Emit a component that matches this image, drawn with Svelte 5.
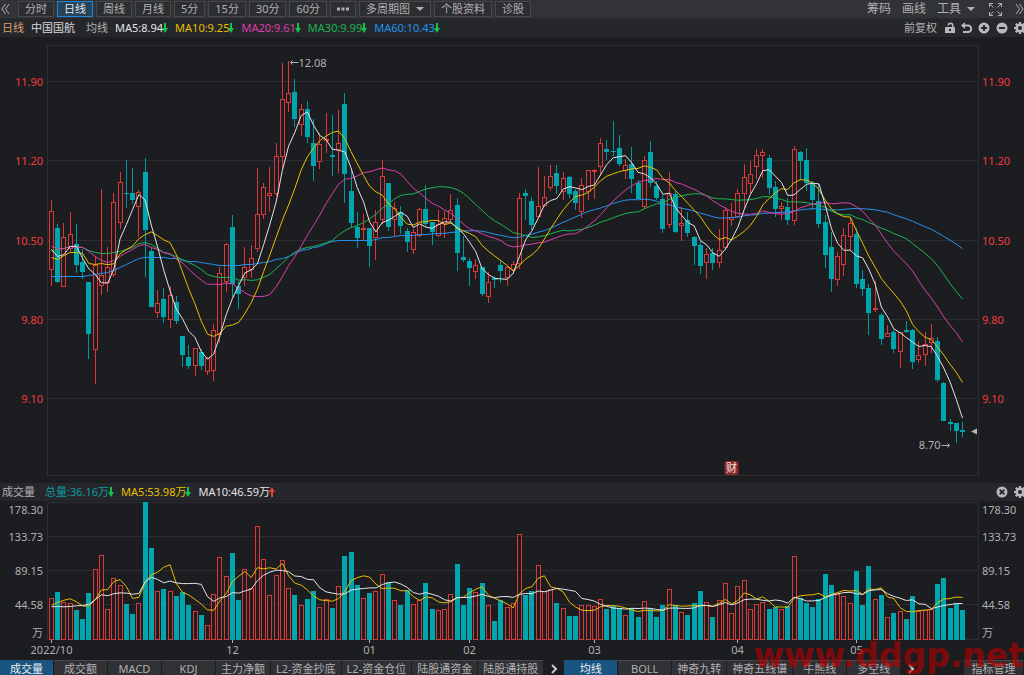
<script lang="ts">
    // one row per trading day: rising, high, body top, body bottom, low, volume top
    // prices are kept in pane units, volumes in thirds of a unit
    const days: number[][] = [
        [1, 200, 211, 269, 285, 354], [0, 224, 228, 282, 283, 337], [1, 223, 237, 286, 286, 367],
        [1, 212, 234, 248, 251, 370], [0, 224, 244, 265, 273, 391], [0, 249, 262, 272, 279, 417],
        [0, 282, 282, 334, 359, 340], [1, 256, 265, 349, 383, 268], [1, 189, 275, 285, 294, 226],
        [1, 247, 267, 282, 291, 386], [1, 193, 202, 274, 276, 293], [1, 172, 182, 222, 228, 314],
        [0, 160, 193, 194, 208, 373], [0, 168, 193, 200, 204, 402], [1, 190, 192, 206, 236, 370],
        [0, 158, 172, 230, 277, 67], [0, 247, 251, 307, 307, 204], [1, 290, 303, 312, 317, 333],
        [0, 288, 299, 317, 323, 327], [1, 286, 295, 319, 327, 333], [0, 296, 302, 321, 324, 348],
        [0, 336, 336, 355, 367, 335], [0, 345, 357, 366, 369, 375], [1, 348, 348, 365, 375, 392],
        [0, 349, 352, 366, 370, 404], [1, 357, 358, 371, 374, 435], [1, 324, 330, 370, 380, 341],
        [1, 267, 273, 334, 342, 231], [1, 243, 244, 281, 291, 287], [0, 215, 227, 284, 297, 219],
        [0, 281, 286, 294, 309, 359], [1, 247, 267, 277, 285, 268], [1, 245, 258, 269, 277, 324],
        [1, 168, 214, 248, 251, 138], [1, 183, 187, 214, 218, 236], [1, 167, 193, 195, 211, 344],
        [1, 143, 156, 193, 195, 285], [1, 63, 99, 156, 168, 239], [1, 61, 93, 102, 111, 325],
        [0, 79, 92, 119, 127, 346], [1, 104, 109, 124, 135, 374], [0, 101, 109, 137, 143, 356],
        [0, 119, 143, 166, 181, 332], [1, 133, 144, 161, 168, 381], [1, 113, 139, 140, 152, 358],
        [0, 115, 155, 157, 176, 383], [1, 110, 143, 149, 172, 317], [0, 93, 104, 174, 203, 228],
        [0, 170, 191, 223, 227, 216], [0, 212, 227, 238, 248, 314], [1, 214, 228, 229, 239, 354],
        [0, 228, 228, 246, 267, 338], [1, 210, 222, 237, 259, 333], [1, 160, 176, 219, 223, 282],
        [0, 183, 183, 227, 231, 305], [1, 202, 208, 219, 235, 359], [0, 206, 212, 226, 234, 375],
        [0, 228, 231, 242, 252, 330], [1, 229, 232, 249, 253, 373], [1, 208, 209, 235, 236, 361],
        [0, 185, 209, 224, 226, 308], [0, 222, 222, 232, 245, 388], [1, 210, 224, 235, 236, 391],
        [1, 211, 218, 223, 237, 388], [1, 194, 210, 219, 222, 343], [0, 198, 205, 253, 271, 252],
        [0, 236, 257, 260, 262, 375], [0, 258, 261, 268, 286, 324], [1, 259, 265, 271, 278, 336],
        [0, 267, 267, 294, 296, 308], [1, 272, 282, 296, 302, 376], [0, 276, 278, 280, 288, 423],
        [0, 261, 265, 271, 283, 361], [1, 266, 267, 277, 285, 381], [1, 261, 264, 269, 273, 370],
        [1, 193, 198, 263, 268, 163], [0, 189, 193, 196, 220, 345], [0, 197, 201, 225, 230, 332],
        [1, 167, 206, 216, 217, 256], [1, 176, 197, 205, 206, 333], [1, 165, 176, 187, 190, 328],
        [0, 165, 173, 186, 194, 369], [1, 172, 178, 191, 199, 385], [0, 176, 177, 194, 198, 409],
        [0, 189, 191, 203, 210, 407], [1, 178, 185, 211, 217, 376], [1, 170, 170, 191, 199, 376],
        [1, 169, 170, 171, 198, 378], [1, 138, 143, 166, 175, 357], [0, 140, 149, 152, 160, 388],
        [0, 121, 151, 152, 156, 379], [0, 135, 148, 164, 166, 384], [1, 159, 165, 170, 178, 405],
        [0, 147, 164, 179, 193, 385], [0, 180, 183, 199, 199, 412], [1, 156, 160, 206, 208, 363],
        [0, 141, 152, 183, 187, 385], [0, 181, 186, 198, 200, 412], [0, 195, 199, 229, 233, 375],
        [1, 172, 193, 224, 227, 328], [0, 191, 194, 232, 233, 375], [1, 207, 223, 225, 240, 397],
        [0, 212, 220, 233, 237, 406], [0, 236, 237, 246, 265, 370], [0, 241, 245, 266, 274, 334],
        [1, 248, 254, 262, 278, 367], [0, 248, 253, 263, 270, 412], [1, 229, 250, 262, 267, 361],
        [1, 207, 210, 247, 249, 309], [1, 203, 217, 219, 225, 400], [1, 189, 193, 216, 217, 319],
        [1, 164, 177, 193, 207, 299], [1, 161, 174, 183, 193, 386], [1, 149, 155, 166, 178, 373],
        [1, 149, 152, 155, 177, 367], [0, 155, 158, 188, 195, 388], [0, 181, 187, 209, 217, 382],
        [1, 202, 206, 208, 219, 386], [0, 198, 207, 220, 225, 379], [1, 146, 149, 220, 224, 229],
        [0, 151, 152, 161, 180, 355], [0, 148, 160, 183, 191, 370], [0, 181, 183, 200, 210, 382],
        [0, 184, 201, 224, 228, 358], [0, 215, 222, 255, 268, 283], [0, 232, 247, 279, 292, 316],
        [1, 252, 256, 279, 285, 341], [1, 228, 235, 264, 275, 349], [1, 218, 223, 236, 250, 370],
        [0, 228, 234, 284, 288, 273], [0, 270, 279, 289, 296, 375], [0, 284, 288, 313, 335, 259],
        [1, 281, 308, 309, 311, 358], [0, 313, 315, 339, 345, 345], [1, 325, 333, 336, 336, 410],
        [0, 330, 332, 349, 353, 399], [1, 332, 332, 351, 367, 394], [0, 321, 330, 332, 333, 417],
        [0, 329, 330, 362, 369, 348], [1, 341, 355, 359, 362, 394], [1, 332, 344, 354, 365, 391],
        [1, 324, 338, 342, 352, 386], [0, 337, 341, 380, 382, 313], [0, 382, 383, 421, 421, 295],
        [0, 419, 422, 424, 431, 385], [0, 423, 423, 431, 443, 370], [0, 422, 430, 432, 437, 391],
    ];

    const closes = days.map((d) => (d[0] ? d[2] : d[3]));
    const volumes = days.map((d) => d[5]);

    // averages that reach back before the first visible day
    const before: Record<number, number[]> = {
        5: [249, 256, 254, 246],
        10: [257, 259, 255, 252, 252, 253, 263, 264, 263],
        20: [246, 248, 248, 246, 247, 247, 251, 256, 260, 262, 260, 256, 252, 249, 245, 244, 247, 249, 252],
        30: [
            251, 249, 248, 246, 246, 247, 250, 252, 253, 253, 252, 251, 249, 247, 243, 242, 244, 248, 252, 254,
            256, 259, 262, 265, 269, 274, 276, 277, 277,
        ],
        60: [
            276, 276, 276, 276, 276, 276, 275, 274, 273, 272, 270, 267, 264, 261, 258, 257, 257, 257, 257, 258,
            258, 260, 261, 261, 262, 263, 264, 265, 265, 265, 265, 264, 264, 263, 262, 261, 259, 258, 256, 253,
            250, 249, 247, 246, 243, 241, 240, 240, 240, 240, 240, 240, 239, 237, 237, 236, 235, 235, 235,
        ],
    };

    function average(values: number[], n: number, start: number[]) {
        return values.map((_, i) =>
            i < n - 1 ? start[i] : values.slice(i - n + 1, i + 1).reduce((a, b) => a + b, 0) / n
        );
    }

    const priceLines = [
        { name: "blue", ys: average(closes, 60, before[60]) },
        { name: "green", ys: average(closes, 30, before[30]) },
        { name: "pink", ys: average(closes, 20, before[20]) },
        { name: "yellow", ys: average(closes, 10, before[10]) },
        { name: "white", ys: average(closes, 5, before[5]) },
    ];

    const volumeLines = [
        { name: "yellow", ys: average(volumes, 5, [374, 366, 359, 355]) },
        { name: "white", ys: average(volumes, 10, [379, 378, 379, 378, 376, 375, 371, 358, 343]) },
    ].map((l) => ({ name: l.name, ys: l.ys.map(volumeY) }));

    const priceTicks = [
        { y: 81, label: "11.90" },
        { y: 160, label: "11.20" },
        { y: 240, label: "10.50" },
        { y: 319, label: "9.80" },
        { y: 398, label: "9.10" },
    ];
    const volumeTicks = [
        { y: 536, label: "133.73" },
        { y: 570, label: "89.15" },
        { y: 604, label: "44.58" },
    ];
    const months = [
        { i: 0, label: "2022/10" },
        { i: 29, label: "12" },
        { i: 51, label: "01" },
        { i: 67, label: "02" },
        { i: 87, label: "03" },
        { i: 110, label: "04" },
        { i: 129, label: "05" },
    ];

    const periods = ["分时", "日线", "周线", "月线", "5分", "15分", "30分", "60分"];
    let period = $state("日线");

    const averages = [
        { name: "white", text: "MA5:8.94" },
        { name: "yellow", text: "MA10:9.25" },
        { name: "pink", text: "MA20:9.61" },
        { name: "green", text: "MA30:9.99" },
        { name: "blue", text: "MA60:10.43" },
    ];
    const totals = [
        { name: "teal", text: "总量:36.16万", up: false },
        { name: "yellow", text: "MA5:53.98万", up: false },
        { name: "white", text: "MA10:46.59万", up: true },
    ];

    const lowerTabs = ["成交量", "成交额", "MACD", "KDJ", "主力净额", "L2-资金抄底", "L2-资金仓位", "陆股通资金", "陆股通持股"];
    const upperTabs = ["均线", "BOLL", "神奇九转", "神奇五线谱", "牛熊线", "多空线"];
    let lower = $state("成交量");
    let upper = $state("均线");

    let width = $state(1024);
    let right = $derived(width - 46);
    let step = $derived((right - 67) / (days.length - 1));

    function x(i: number) {
        return Math.floor(51.5 + i * step) + 0.5;
    }
    function volumeY(v: number) {
        return 480 + v / 3;
    }
    function points(ys: number[]) {
        return ys.map((y, i) => `${(51.5 + i * step).toFixed(1)},${(y + 0.5).toFixed(1)}`).join(" ");
    }
</script>

{#snippet arrow(up: boolean)}
    <svg class="arrow" class:up width="6" height="12" viewBox="0 0 6 12" aria-hidden="true">
        <path d="M2 1h2v5h2L3 11 0 6h2z" />
    </svg>
{/snippet}

{#snippet gear()}
    <svg width="12" height="12" viewBox="0 0 12 12" aria-hidden="true">
        <path
            fill-rule="evenodd"
            d="M5 0h2l.3 1.700 1 .4L9.700 1.100l1.300 1.300-1 1.400.4 1L12 5v2l-1.700.3-.4 1 1 1.400-1.300 1.300-1.400-1-1 .4L7 12H5l-.3-1.700-1-.4-1.400 1-1.300-1.300 1-1.400-.4-1L0 7V5l1.700-.3.4-1-1-1.400 1.300-1.300 1.400 1 1-.4zM6 4a2 2 0 1 0 0 4 2 2 0 0 0 0-4z"
        />
    </svg>
{/snippet}

<div class="app" bind:clientWidth={width}>
    <nav class="toolbar">
        <button class="plain" aria-label="收起">
            <svg width="9" height="12" viewBox="0 0 9 12" class="line"><path d="M4.500 1 1 6l3.500 5M8 1 4.500 6 8 11" /></svg>
        </button>
        <div class="periods">
            {#each periods as p}
                <button class="period" class:active={p === period} onclick={() => (period = p)}>{p}</button>
            {/each}
            <button class="period more" aria-label="更多周期">
                <svg width="12" height="4" viewBox="0 0 12 4"><path d="M0 .5h3v3H0zM4.500 .5h3v3h-3zM9 .5h3v3H9z" /></svg>
            </button>
            <button class="period menu" aria-haspopup="menu">
                多周期图
                <svg width="8" height="4" viewBox="0 0 8 4"><path d="M0 0h8L4 4z" /></svg>
            </button>
            <button class="period">个股资料</button>
            <button class="period">诊股</button>
        </div>
        <div class="tools">
            <button class="plain">筹码</button>
            <button class="plain">画线</button>
            <button class="plain menu" aria-haspopup="menu">
                工具
                <svg width="8" height="4" viewBox="0 0 8 4"><path d="M0 0h8L4 4z" /></svg>
            </button>
            <button class="plain expand" aria-label="全屏">
                <svg width="13" height="13" viewBox="0 0 13 13" class="line">
                    <path d="M.5 4V.5H4M.5.5l4 4M9 .5h3.500V4M12.500.5l-4 4M.5 9v3.500H4M.5 12.500l4-4M9 12.500h3.500V9M12.500 12.500l-4-4" />
                </svg>
            </button>
            <button class="plain" aria-label="展开">
                <svg width="9" height="12" viewBox="0 0 9 12" class="line"><path d="M1 1l3.500 5L1 11M4.500 1 8 6l-3.500 5" /></svg>
            </button>
        </div>
    </nav>

    <header class="info">
        <span class="kind">日线</span>
        <span class="stock">中国国航</span>
        <span class="label">均线</span>
        {#each averages as a}
            <span class="value {a.name}">{a.text}{@render arrow(false)}</span>
        {/each}
        <div class="icons">
            <button class="plain adjust">前复权</button>
            <button class="plain" aria-label="锁定">
                <svg width="10" height="12" viewBox="0 0 10 12">
                    <path fill-rule="evenodd" d="M0 5h7V3.500a1.500 1.500 0 0 0-3 0H2.500a3 3 0 0 1 6 0V5H10v6H0zM4 7v2h2V7z" />
                </svg>
            </button>
            <button class="plain" aria-label="撤销">
                <svg width="11" height="12" viewBox="0 0 11 12">
                    <path class="thick" d="M3 3.500h4a3 3 0 0 1 0 6.500H2" />
                    <path d="M4 0v7L0 3.500z" />
                </svg>
            </button>
            <button class="plain" aria-label="放大">
                <svg width="12" height="12" viewBox="0 0 12 12">
                    <path fill-rule="evenodd" d="M6 .5a5.500 5.500 0 1 0 0 11 5.500 5.500 0 0 0 0-11zM5 3h2v2h2v2H7v2H5V7H3V5h2z" />
                </svg>
            </button>
            <button class="plain" aria-label="缩小">
                <svg width="12" height="12" viewBox="0 0 12 12">
                    <path fill-rule="evenodd" d="M6 .5a5.500 5.500 0 1 0 0 11 5.500 5.500 0 0 0 0-11zM3 5h6v2H3z" />
                </svg>
            </button>
            <button class="plain" aria-label="设置">{@render gear()}</button>
        </div>
    </header>

    <svg class="chart" {width} height="446" viewBox="0 37 {width} 446">
        <rect class="frame" x="47.5" y="45.5" width={right - 47} height="430" />
        {#each priceTicks as t}
            <path class="grid" d="M48 {t.y + 0.5}H{right}" />
            <text class="price" x="43" y={t.y + 5} text-anchor="end">{t.label}</text>
            <text class="price" x={right + 4} y={t.y + 5}>{t.label}</text>
        {/each}

        {#each days as d, i}
            {#if d[0]}
                <path class="rise" d="M{x(i)} {d[1]}V{d[2]}M{x(i)} {d[3] + 1}V{d[4] + 1}" />
                <rect class="rise" x={x(i) - 2} y={d[2] + 0.5} width="4" height={d[3] - d[2]} />
            {:else}
                <path class="fall" d="M{x(i)} {d[1]}V{d[4]}" />
                <rect class="drop" x={x(i) - 2.5} y={d[2]} width="5" height={Math.max(d[3] - d[2], 1)} />
            {/if}
        {/each}

        {#each priceLines as l}
            <polyline class="average {l.name}" points={points(l.ys)} />
        {/each}

        <path class="pointer" d="M{x(38) + 2} 62.500h8m-6-2-2 2 2 2" />
        <text x={x(38) + 10} y="67">12.08</text>
        <text x={x(145) - 16} y="449" text-anchor="end">8.70</text>
        <path class="pointer" d="M{x(145) - 15} 445.500h8m-2-2 2 2-2 2" />
        <path class="last" d="M{right - 7} 431.500l6-3v6z" />
        <rect class="badge" x={x(109) - 7} y="461" width="14" height="14" rx="2" />
        <text class="report" x={x(109)} y="472" text-anchor="middle">财</text>
    </svg>

    <header class="info">
        <span class="volume">成交量</span>
        {#each totals as t}
            <span class="value {t.name}">{t.text}{@render arrow(t.up)}</span>
        {/each}
        <div class="icons">
            <button class="plain" aria-label="关闭">
                <svg width="12" height="12" viewBox="0 0 12 12">
                    <path
                        fill-rule="evenodd"
                        d="M6 .5a5.500 5.500 0 1 0 0 11 5.500 5.500 0 0 0 0-11zM4.300 3 6 4.700 7.700 3 9 4.300 7.300 6 9 7.700 7.700 9 6 7.300 4.300 9 3 7.700 4.700 6 3 4.300z"
                    />
                </svg>
            </button>
            <button class="plain" aria-label="设置">{@render gear()}</button>
        </div>
    </header>

    <svg class="chart" {width} height="159" viewBox="0 501 {width} 159">
        <rect class="frame" x="47.5" y="502.5" width={right - 47} height="137" />
        <text x="43" y="514" text-anchor="end">178.30</text>
        <text x={right + 4} y="514">178.30</text>
        {#each volumeTicks as t}
            <path class="grid" d="M48 {t.y + 0.5}H{right}" />
            <text x="43" y={t.y + 5} text-anchor="end">{t.label}</text>
            <text x={right + 4} y={t.y + 5}>{t.label}</text>
        {/each}
        <text x="43" y="637" text-anchor="end">万</text>
        <text x={right + 4} y="637">万</text>

        {#each days as d, i}
            {@const top = Math.round(volumeY(d[5]))}
            {#if d[0]}
                <rect class="rise" x={x(i) - 2} y={top + 0.5} width="4" height={639 - top} />
            {:else}
                <rect class="drop" x={x(i) - 2.5} y={top} width="5" height={640 - top} />
            {/if}
        {/each}

        {#each volumeLines as l}
            <polyline class="average {l.name}" points={points(l.ys)} />
        {/each}

        {#each months as m}
            <path class="tick" d="M{x(m.i)} 640v3" />
            <text x={x(m.i)} y="654" text-anchor="middle">{m.label}</text>
        {/each}
    </svg>

    <footer class="tabs">
        {#each lowerTabs as t}
            <button class="tab" class:active={t === lower} onclick={() => (lower = t)}>{t}</button>
        {/each}
        <button class="plain next" aria-label="更多指标">
            <svg width="6" height="10" viewBox="0 0 6 10"><path class="thick" d="M1 1l4 4-4 4" /></svg>
        </button>
        {#each upperTabs as t}
            <button class="tab" class:active={t === upper} onclick={() => (upper = t)}>{t}</button>
        {/each}
        <button class="plain next" aria-label="更多主图指标">
            <svg width="6" height="10" viewBox="0 0 6 10"><path class="thick" d="M1 1l4 4-4 4" /></svg>
        </button>
        <button class="tab manage">指标管理</button>
    </footer>

    <div class="watermark">www.ddgp.net</div>
</div>

<style>
    :global(body) {
        margin: 0;
        background: #1c1d21;
    }

    .app {
        position: relative;
        display: flex;
        flex-direction: column;
        height: 100vh;
        overflow: hidden;
        background: #1c1d21;
        color: #b0b0b2;
        font-family: "Noto Sans", "Noto Sans CJK SC", sans-serif;
        font-size: 11px;
        line-height: 16px;
        white-space: nowrap;
    }

    button {
        margin: 0;
        font: inherit;
        color: inherit;
        cursor: pointer;
    }

    button svg {
        display: block;
        fill: currentColor;
    }

    button .line {
        fill: none;
        stroke: currentColor;
    }

    .thick {
        fill: none;
        stroke: currentColor;
        stroke-width: 2;
    }

    .plain {
        display: flex;
        align-items: center;
        border: none;
        padding: 0;
        background: none;
    }

    .toolbar {
        display: flex;
        flex: none;
        align-items: center;
        height: 18px;
        padding-left: 1px;
        background: #323337;
        border-bottom: 1px solid #2a2b2f;
    }

    .periods {
        display: flex;
        gap: 3px;
        margin-left: 8px;
    }

    .period {
        display: flex;
        align-items: center;
        height: 16px;
        padding: 0 6px;
        border: 1px solid #47484c;
        background: #2d2e32;
        line-height: 14px;
    }

    .period.active {
        border-color: #1e86d8;
        background: #26435c;
        color: #e4e4e4;
    }

    .menu {
        gap: 6px;
    }

    .tools {
        display: flex;
        align-items: center;
        gap: 11px;
        margin-left: auto;
        font-size: 12px;
    }

    .expand {
        margin: 0 2px 0 3px;
    }

    .info {
        display: flex;
        flex: none;
        align-items: center;
        gap: 7px;
        height: 18px;
        padding-left: 2px;
        background: #26272b;
    }

    .kind {
        color: #d9a06a;
    }

    .stock {
        margin-right: 4px;
        color: #d8d8d8;
    }

    .volume {
        margin-right: 3px;
    }

    .value {
        display: flex;
        align-items: center;
    }

    .arrow {
        margin-left: -1px;
        fill: #12c24c;
    }

    .arrow.up {
        fill: #f03a3a;
        transform: rotate(180deg);
    }

    .white {
        color: #e4e4e4;
    }
    .yellow {
        color: #e8be00;
    }
    .pink {
        color: #dc3eac;
    }
    .green {
        color: #1cb450;
    }
    .blue {
        color: #2292ee;
    }
    .teal {
        color: #0b9ba3;
    }

    .icons {
        display: flex;
        align-items: center;
        gap: 6px;
        margin: 0 -2px 0 auto;
        color: #b8b8ba;
    }

    .adjust {
        margin-right: 2px;
        color: #b0b0b2;
    }

    .chart {
        display: block;
        flex: none;
    }

    .chart text {
        fill: #b0b0b2;
    }

    .chart .price {
        fill: #f03c3c;
    }

    .frame,
    .grid {
        fill: none;
        stroke: #2d2e32;
    }

    .rise {
        fill: #1c1d21;
        stroke: #dc3838;
    }

    .fall {
        stroke: #00979f;
    }

    .drop {
        fill: #00a5ae;
    }

    .average {
        fill: none;
        stroke: currentColor;
    }

    .pointer,
    .tick {
        fill: none;
        stroke: #b0b0b2;
    }

    .last {
        fill: #b8b8ba;
    }

    .badge {
        fill: #8e2a2c;
    }

    .chart .report {
        fill: #f0e4e4;
    }

    .tabs {
        display: flex;
        flex: none;
        height: 17px;
    }

    .tab {
        flex: none;
        min-width: 54px;
        padding: 0 5px;
        border: none;
        border-top: 1px solid #47484c;
        border-right: 1px solid #1c1d21;
        background: #303135;
    }

    .tab.active {
        border-top-color: #1a5582;
        background: #1a5582;
        color: #eeeeee;
    }

    .next {
        flex: none;
        justify-content: center;
        width: 20px;
        color: #c8c8c8;
    }

    .manage {
        width: 60px;
        margin-left: auto;
    }

    /* site mark printed over the corner of the chart */
    .watermark {
        position: absolute;
        right: 0;
        bottom: 0;
        color: rgba(180, 0, 0, 0.65);
        font: bold 33px/38px "DejaVu Sans", sans-serif;
        pointer-events: none;
    }
</style>
